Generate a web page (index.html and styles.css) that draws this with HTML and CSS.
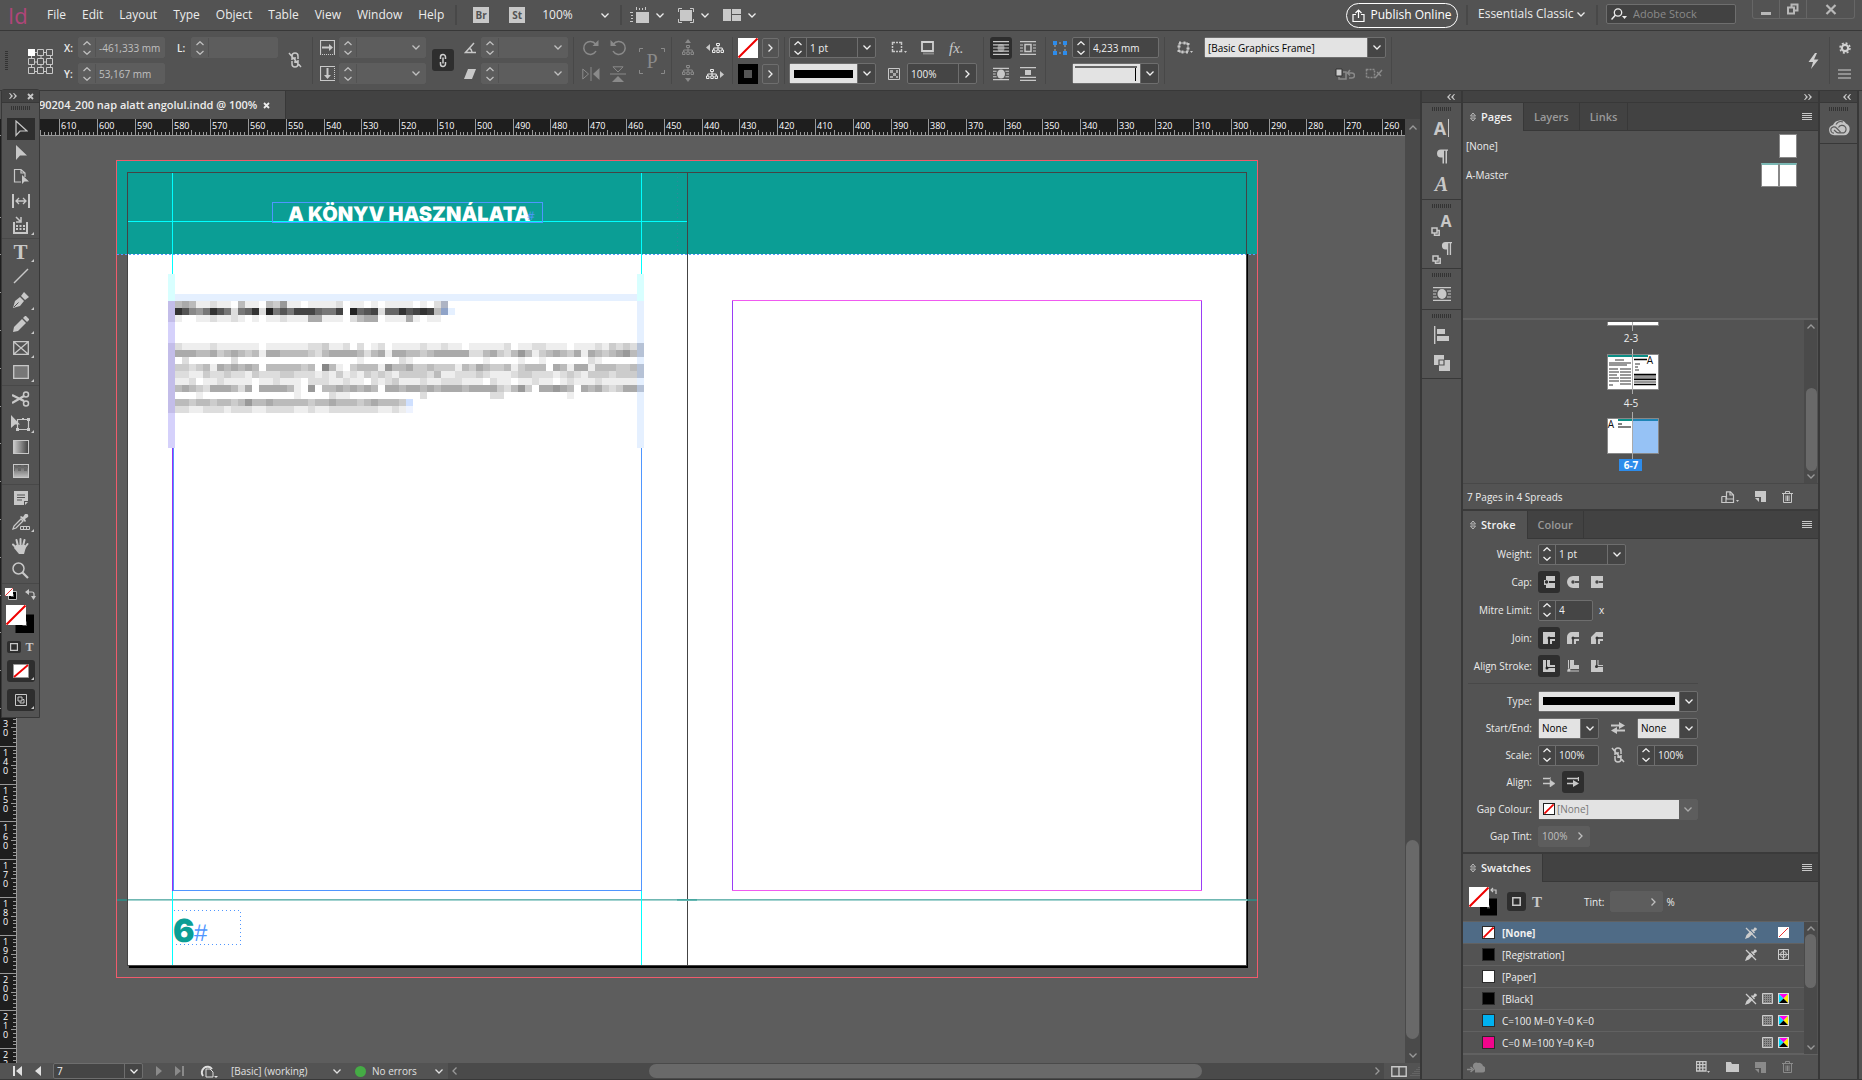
FILE: index.html
```html
<!DOCTYPE html>
<html lang="en">
<head>
<meta charset="utf-8">
<title>90204_200 nap alatt angolul.indd @ 100%</title>
<link rel="stylesheet" href="styles.css">
</head>
<body>
<svg class="defs" aria-hidden="true">
  <defs>
    <symbol id="down" viewBox="0 0 8 5"><path d="M.5.5 4 4 7.5.5" fill="none" stroke="currentColor" stroke-width="1.3"/></symbol>
    <symbol id="up" viewBox="0 0 8 5"><path d="M.5 4.5 4 1 7.5 4.5" fill="none" stroke="currentColor" stroke-width="1.3"/></symbol>
    <symbol id="right" viewBox="0 0 5 8"><path d="M.5.5 4 4 .5 7.5" fill="none" stroke="currentColor" stroke-width="1.3"/></symbol>
    <symbol id="left" viewBox="0 0 5 8"><path d="M4.500.5 1 4 4.500 7.500" fill="none" stroke="currentColor" stroke-width="1.3"/></symbol>
    <symbol id="steps" viewBox="0 0 8 14"><path d="M.5 4 4 .7 7.500 4M.5 10 4 13.300 7.500 10" fill="none" stroke="currentColor" stroke-width="1.2"/></symbol>
    <symbol id="dright" viewBox="0 0 8 6"><path d="M0 0h1l3 3-3 3H0l2-3zM4 0h1l3 3-3 3H4l2-3z" fill="currentColor"/></symbol>
    <symbol id="dleft" viewBox="0 0 8 6"><path d="M8 0H7L4 3l3 3h1L6 3zM4 0H3L0 3l3 3h1L2 3z" fill="currentColor"/></symbol>
    <symbol id="menu" viewBox="0 0 10 8"><path d="M0 .5h10M0 2.500h10M0 4.500h10M0 6.500h10" stroke="currentColor"/></symbol>
    <symbol id="updown" viewBox="0 0 6 10"><path d="M.5 4 3 1l2.500 3zM.5 6 3 9l2.500-3z" fill="none" stroke="currentColor"/></symbol>
    <symbol id="unlink" viewBox="0 0 14 16"><path d="M4 8V4a3 3 0 0 1 6 0v3M4 9v3a3 3 0 0 0 6 0V8M7 5v6M1 1l12 14" fill="none" stroke="currentColor" stroke-width="1.500"/></symbol>
    <symbol id="none" viewBox="0 0 20 20"><path d="M0 0h20v20H0z" fill="#fff"/><path d="M.5 19.500 19.500.5" stroke="#e00" stroke-width="2"/></symbol>
    <symbol id="none-sm" viewBox="0 0 12 12"><path d="M0 0h12v12H0z" fill="#fff"/><path d="M.5 11.500 11.500.5" stroke="#e00" stroke-width="2"/></symbol>
    <symbol id="tree" viewBox="0 0 12 10"><path d="M4.500.5h3v2h-3zM.5 7h2.500v2.500H.5zM4.800 7h2.500v2.500H4.800zM9 7h2.500v2.500H9zM6 3v4M1.700 7V5h8.600v2" fill="none" stroke="currentColor"/></symbol>
    <symbol id="wrapoval" viewBox="0 0 18 14"><path d="M0 .7h18M0 13.300h18M0 4h4M14 4h4M0 7h3M15 7h3M0 10h4M14 10h4" stroke="currentColor" stroke-width="1.200"/><ellipse cx="9" cy="7" rx="4.500" ry="5" fill="currentColor"/></symbol>
    <symbol id="pilcrow" viewBox="0 0 12 14"><path d="M5 0h7v1.200h-1V14H9.500V1.200H8V14H6.500V8H5a4 4 0 0 1 0-8z" fill="currentColor"/></symbol>
    <symbol id="pen-off" viewBox="0 0 12 12"><path d="M0 12l1.500-4 4-4L8 6.500l-4 4zM6 3l1-1 1 1 1.500-2.500C11 0 12.500 1.500 11.500 3L9 4.500l1 1-1 1z" fill="#ccc"/><path d="M1 1l10 10" stroke="#ccc" stroke-width="1.300"/></symbol>
    <symbol id="tintbox" viewBox="0 0 11 11"><path d="M.5.5h10v10H.5z" fill="#8a8a8a" stroke="#ccc"/><path d="M2 2.500h7M2 4.500h7M2 6.500h7M2 8.500h7" stroke="#555" stroke-dasharray="1 1"/></symbol>
    <symbol id="cmyk" viewBox="0 0 11 11"><path d="M0 0h11v11H0z" fill="#ddd"/><path d="M1 1h9L5.500 5.500z" fill="#f0e"/><path d="M1 1v9l4.500-4.500z" fill="#0df"/><path d="M10 1v9L5.500 5.500z" fill="#fe0"/><path d="M1 10h9L5.500 5.500z" fill="#000"/></symbol>
    <symbol id="newpage" viewBox="0 0 11 11"><path d="M0 0h11v11H6V6H0z" fill="currentColor"/><path d="M0 7h4v4z" fill="currentColor"/></symbol>
    <symbol id="trash" viewBox="0 0 11 12"><path d="M0 2.500h11M3.500 2V.5h4V2M1.500 3v8.500h8V3M4 4.500v5.500M5.500 4.500v5.500M7 4.500v5.500" fill="none" stroke="currentColor"/></symbol>
    <symbol id="corner" viewBox="0 0 4 4"><path d="M4 0v4H0z" fill="currentColor"/></symbol>
  </defs>
</svg>

<div class="app">
  <header class="menubar">
    <span class="logo">Id</span>
    <nav class="menus">
      <a href="#">File</a><a href="#">Edit</a><a href="#">Layout</a><a href="#">Type</a><a href="#">Object</a><a href="#">Table</a><a href="#">View</a><a href="#">Window</a><a href="#">Help</a>
    </nav>
    <span class="vsep"></span>
    <button class="badge">Br</button>
    <button class="badge">St</button>
    <label class="zoom"><select aria-label="Zoom"><option>100%</option></select><svg width="8" height="5"><use href="#down"/></svg></label>
    <span class="vsep"></span>
    <div class="views">
      <button aria-label="View options"><svg width="19" height="16"><path d="M6 5h13v11H6z" fill="#c8c8c8"/><path d="M6.500 0v3M9.500 1v2M12.500 1v2M15.500 0v3M0 5.500h3M1 8.500h2M1 11.500h2M0 14.500h3" stroke="#c8c8c8"/></svg><svg width="8" height="5"><use href="#down"/></svg></button>
      <button aria-label="Screen mode"><svg width="16" height="15"><path d="M2 2h12v11H2z" fill="#c8c8c8"/><path d="M.5 4V.5H4M12 .5h3.500V4M.5 11v3.500H4M12 14.500h3.500V11" fill="none" stroke="#c8c8c8"/></svg><svg width="8" height="5"><use href="#down"/></svg></button>
      <button aria-label="Arrange documents"><svg width="18" height="12"><path d="M0 0h8v12H0zM9 0h9v5H9zM9 6h9v6H9z" fill="#c8c8c8"/></svg><svg width="8" height="5"><use href="#down"/></svg></button>
    </div>
    <span class="grow"></span>
    <button class="publish"><svg width="13" height="13"><path d="M4 5.500H1v7h11v-7H9M6.500 9V1M3.500 4l3-3 3 3" fill="none" stroke="currentColor" stroke-width="1.200"/></svg>Publish Online</button>
    <span class="vsep"></span>
    <button class="workspace-name">Essentials Classic<svg width="8" height="5"><use href="#down"/></svg></button>
    <span class="vsep"></span>
    <label class="search"><svg width="16" height="12"><circle cx="7" cy="4.500" r="3.700" fill="none" stroke="currentColor" stroke-width="1.300"/><path d="M4.500 7 .5 11.500" stroke="currentColor" stroke-width="1.500"/><path d="M11 8h5l-2.500 3z" fill="currentColor"/></svg><input type="text" placeholder="Adobe Stock" aria-label="Adobe Stock"></label>
    <div class="winbtns">
      <button aria-label="Minimise"><svg width="12" height="12"><path d="M1 9h10v3H1z" fill="currentColor"/></svg></button>
      <button aria-label="Restore"><svg width="12" height="12"><path d="M1 4.500h6v6H1zM4.500 4V1.500h6v6H8" fill="none" stroke="currentColor" stroke-width="2"/></svg></button>
      <button aria-label="Close"><svg width="12" height="12"><path d="M1.500 2l9 9M10.500 2l-9 9" stroke="currentColor" stroke-width="2.200"/></svg></button>
    </div>
  </header>

  <section class="control">
    <span class="grip-v"></span>
    <svg class="refpoint" width="26" height="26"><path d="M3.500 3.500h19v19h-19zM13 3v20M3 13h20" fill="none" stroke="#c8c8c8"/><g fill="#535353" stroke="#c8c8c8"><path d="M9.500.5h6v6h-6zM18.500.5h6v6h-6zM.5 9.500h6v6h-6zM9.500 9.500h6v6h-6zM18.500 9.500h6v6h-6zM.5 18.500h6v6h-6zM9.500 18.500h6v6h-6zM18.500 18.500h6v6h-6z"/></g><path d="M0 0h7v7H0z" fill="#fff"/></svg>
    <div class="cgroup xy">
      <label for="fx">X:</label><div class="field off"><span><svg width="8" height="14"><use href="#steps"/></svg></span><input id="fx" value="-461,333 mm"></div>
      <label for="fy">Y:</label><div class="field off"><span><svg width="8" height="14"><use href="#steps"/></svg></span><input id="fy" value="53,167 mm"></div>
    </div>
    <div class="cgroup xy len">
      <label for="fl">L:</label><div class="field off"><span><svg width="8" height="14"><use href="#steps"/></svg></span><input id="fl"></div>
    </div>
    <button class="chain" aria-label="Constrain proportions"><svg width="14" height="16"><use href="#unlink"/></svg></button>
    <span class="csep"></span>
    <div class="cgroup scale">
      <svg width="15" height="15"><path d="M.5 14.500V.5h14v14" fill="none" stroke="#c8c8c8" stroke-width="1.200"/><path d="M0 14.500h15" stroke="#c8c8c8" stroke-dasharray="1 1"/><path d="M2 6.500h7V4l4 3.500L9 11V8.500H2z" fill="#c8c8c8"/></svg>
      <div class="field off"><span><svg width="8" height="14"><use href="#steps"/></svg></span><input aria-label="Scale X"><i><svg width="8" height="5"><use href="#down"/></svg></i></div>
      <svg width="15" height="15"><path d="M14.500 14.500H.5V.5h14" fill="none" stroke="#c8c8c8" stroke-width="1.200"/><path d="M14.500 0v15" stroke="#c8c8c8" stroke-dasharray="1 1"/><path d="M6.500 2v7H4l3.500 4L11 9H8.500V2z" fill="#c8c8c8"/></svg>
      <div class="field off"><span><svg width="8" height="14"><use href="#steps"/></svg></span><input aria-label="Scale Y"><i><svg width="8" height="5"><use href="#down"/></svg></i></div>
    </div>
    <button class="tbtn on" aria-label="Link scaling"><svg width="8" height="15"><path d="M1.500 6V4a2.500 2.500 0 0 1 5 0v2M1.500 9v2a2.500 2.500 0 0 0 5 0V9M4 4.500v6" fill="none" stroke="#d0d0d0" stroke-width="1.500"/></svg></button>
    <div class="cgroup angle">
      <svg width="12" height="12"><path d="M10 1 1.500 10.500H12M5 6a5 5 0 0 1 3 4" fill="none" stroke="#c8c8c8" stroke-width="1.500"/></svg>
      <div class="field off"><span><svg width="8" height="14"><use href="#steps"/></svg></span><input aria-label="Rotation"><i><svg width="8" height="5"><use href="#down"/></svg></i></div>
      <svg width="12" height="10"><path d="M4 0h8L8 10H0z" fill="#c8c8c8"/></svg>
      <div class="field off"><span><svg width="8" height="14"><use href="#steps"/></svg></span><input aria-label="Shear"><i><svg width="8" height="5"><use href="#down"/></svg></i></div>
    </div>
    <span class="csep"></span>
    <div class="cgroup rot dim">
      <svg width="18" height="16"><path d="M13.500 4A6.500 6.500 0 1 0 14 11" fill="none" stroke="currentColor" stroke-width="1.500"/><path d="M16.500 0v6h-6z" fill="currentColor"/></svg>
      <svg width="18" height="16"><path d="M4.500 4A6.500 6.500 0 1 1 4 11" fill="none" stroke="currentColor" stroke-width="1.500"/><path d="M1.500 0v6h6z" fill="currentColor"/></svg>
      <svg width="18" height="14"><path d="M.8 2v10L6.500 7zM9 0v14" fill="none" stroke="currentColor"/><path d="M17.500 1v12L11 7z" fill="currentColor"/></svg>
      <svg width="18" height="16"><path d="M4 .8h10L9 6zM1 8h16" fill="none" stroke="currentColor"/><path d="M3 16h12L9 10z" fill="currentColor"/></svg>
    </div>
    <div class="pbox dim"><svg width="26" height="26"><path d="M.5 4V.5H4M22 .5h3.500V4M.5 22v3.500H4M22 25.500h3.500V22" fill="none" stroke="currentColor"/></svg><b>P</b></div>
    <span class="csep"></span>
    <div class="cgroup nav">
      <svg class="dim" width="14" height="17"><path d="M4 4h6L7 0z" fill="currentColor"/><use href="#tree" y="6" x="1" width="12" height="10"/></svg>
      <svg width="19" height="12"><path d="M4 2v7L0 5.500z" fill="#c8c8c8"/><use href="#tree" x="6" y="1" width="12" height="10"/></svg>
      <svg class="dim" width="14" height="17"><use href="#tree" x="1" width="12" height="10"/><path d="M4 13h6l-3 4z" fill="currentColor"/></svg>
      <svg width="19" height="12"><use href="#tree" y="1" width="12" height="10"/><path d="M14 3v7l4-3.500z" fill="#c8c8c8"/></svg>
    </div>
    <span class="csep"></span>
    <div class="cgroup fill">
      <button class="sw" aria-label="Fill"><svg width="20" height="20"><use href="#none"/></svg></button>
      <button class="more" aria-label="Fill options"><svg width="5" height="8"><use href="#right"/></svg></button>
      <button class="sw" aria-label="Stroke"><svg width="20" height="20"><path d="M0 0h20v20H0z"/><path d="M6 6h8v8H6z" fill="#555"/></svg></button>
      <button class="more" aria-label="Stroke options"><svg width="5" height="8"><use href="#right"/></svg></button>
    </div>
    <span class="csep"></span>
    <div class="cgroup one">
      <div class="field"><span><svg width="8" height="14"><use href="#steps"/></svg></span><input aria-label="Stroke weight" value="1 pt"><i><svg width="8" height="5"><use href="#down"/></svg></i></div>
      <div class="combo line"><select aria-label="Stroke type"><option></option></select><i><svg width="8" height="5"><use href="#down"/></svg></i></div>
    </div>
    <div class="fx">
      <div class="fxrow">
        <svg width="16" height="14"><path d="M1.500 4V1.500H4M8 1.500h2.500V4M1.500 8v2.500H4M8 10.500h2.500V8M5 1.500h2M5 10.500h2M1.500 5v2M10.500 5v2" fill="none" stroke="#c8c8c8" stroke-width="1.500"/><path d="M13 10h3l-1.500 2z" fill="#c8c8c8"/></svg>
        <svg width="14" height="14"><path d="M1 1h11v9H1z" fill="none" stroke="#d0d0d0" stroke-width="1.800"/><path d="M2 12.500h11" stroke="#888" stroke-width="2"/></svg>
        <button class="fxb" aria-label="Effects"><i>fx.</i></button>
      </div>
      <div class="fxrow">
        <svg width="12" height="12"><path d="M.5.5h11v11H.5z" fill="none" stroke="#c8c8c8"/><path d="M2 2h3v3H2zM8 2h2v3H8zM5 5h3v3H5zM2 8h3v2H2zM8 8h2v2H8z" fill="#aaa"/></svg>
        <div class="field pct"><input aria-label="Opacity" value="100%"><i><svg width="5" height="8"><use href="#right"/></svg></i></div>
      </div>
    </div>
    <span class="csep"></span>
    <div class="cgroup wrap">
      <button class="tbtn on" aria-label="No text wrap"><svg width="16" height="14"><path d="M0 .7h16M0 3.800h16M0 7h16M0 10.200h16M0 13.300h16" stroke="#c8c8c8" stroke-width="1.200"/><ellipse cx="8" cy="7" rx="3.500" ry="4" fill="#c8c8c8" opacity=".6"/></svg></button>
      <button class="tbtn" aria-label="Wrap around box"><svg width="16" height="14"><path d="M0 .7h16M0 13.300h16M0 4h3M13 4h3M0 7h3M13 7h3M0 10h3M13 10h3" stroke="#c8c8c8" stroke-width="1.200"/><path d="M5 3.500h6v7H5z" fill="none" stroke="#c8c8c8" stroke-width="1.500"/></svg></button>
      <button class="tbtn" aria-label="Wrap around shape"><svg width="16" height="14" color="#c8c8c8"><use href="#wrapoval"/></svg></button>
      <button class="tbtn" aria-label="Jump object"><svg width="16" height="14"><path d="M0 .7h16M0 10.300h16M0 13.300h16" stroke="#c8c8c8" stroke-width="1.200"/><path d="M5 3h6v5H5z" fill="#c8c8c8"/></svg></button>
    </div>
    <span class="csep"></span>
    <div class="cgroup cornerg">
      <svg width="14" height="14"><path d="M2 2h10v10H2z" fill="none" stroke="#aaa" stroke-dasharray="2 2"/><path d="M0 0h4v4H0zM10 0h4v4h-4zM0 10h4v4H0zM10 10h4v4h-4z" fill="#2d8ceb"/></svg>
      <div class="field"><span><svg width="8" height="14"><use href="#steps"/></svg></span><input aria-label="Corner size" value="4,233 mm"></div>
      <span></span>
      <div class="combo shape"><select aria-label="Corner shape"><option></option></select><i><svg width="8" height="5"><use href="#down"/></svg></i></div>
    </div>
    <span class="csep"></span>
    <div class="objstyle">
      <svg width="16" height="14"><path d="M2 2h9v9H2z" fill="none" stroke="#c8c8c8"/><path d="M2 2h9v9H2z" fill="none" stroke="#c8c8c8" stroke-width="3" stroke-dasharray="2 2.500"/><path d="M13 10h3l-1.500 2z" fill="#c8c8c8"/></svg>
      <div class="combo text"><select aria-label="Object style"><option>[Basic Graphics Frame]</option></select><i><svg width="8" height="5"><use href="#down"/></svg></i></div>
      <div class="objicons dim">
        <svg width="20" height="12"><path d="M1 1h6v7H1z" fill="#ccc" stroke="#333"/><path d="M8 4h3v7H4V9M13 5h4a2 2 0 0 1 0 5h-3M15 2l-2.500 3L15 7.500" fill="none" stroke="currentColor" stroke-width="1.500"/></svg>
        <svg width="18" height="12"><path d="M1.500 1.500h8v8h-8z" fill="none" stroke="currentColor" stroke-width="1.500" stroke-dasharray="2 1"/><path d="M10 10l7-8M12 4l4 4" stroke="currentColor" stroke-width="1.500"/></svg>
      </div>
    </div>
    <span class="csep"></span>
    <span class="grow"></span>
    <button class="bolt" aria-label="Quick apply"><svg width="11" height="16"><path d="M7 0 .5 9H5l-2 7 7.500-9.500H6L9 0z" fill="#d0d0d0"/></svg></button>
    <span class="csep"></span>
    <div class="cfgcol">
      <button aria-label="Customise"><svg width="12" height="12"><circle cx="6" cy="6" r="3.200" fill="none" stroke="#d0d0d0" stroke-width="2.200"/><circle cx="6" cy="6" r="5" fill="none" stroke="#d0d0d0" stroke-width="1.500" stroke-dasharray="2 1.930"/></svg></button>
      <button aria-label="Panel menu"><svg width="13" height="10"><path d="M0 1h13M0 5h13M0 9h13" stroke="#d0d0d0" stroke-width="1.200"/></svg></button>
    </div>
  </section>

  <main class="workspace">
    <section class="document">
      <div class="doctabs"><div class="doctab">90204_200 nap alatt angolul.indd @ 100%<button aria-label="Close document"><svg width="7" height="7"><path d="M1 1l5 5M6 1 1 6" stroke="currentColor" stroke-width="1.800"/></svg></button></div></div>
      <div class="docview">
        <div class="hruler"><svg id="hruler" height="17"></svg></div>
        <div class="vruler"><svg id="vruler" width="17"></svg></div>
        <div class="pasteboard">
          <svg class="spread" width="1143" height="819" viewBox="116 160 1143 819" shape-rendering="crispEdges">
            <path d="M129 174h1119v794H129z" fill="#000"/>
            <path d="M127 172h1120v794H127z" fill="#fff"/>
            <path d="M117 161h1140v93H117z" fill="#0b9e95"/>
            <path d="M117 254.500h1140" stroke="#5a9bff" stroke-dasharray="2 2"/>
            <path d="M677.500 173v81" stroke="#2f8a9a" stroke-dasharray="1 3"/>
            <path d="M127.500 172.500h1119v793h-1119zM687.500 172v793" fill="none" stroke="#444"/>
            <path d="M117 899h10v2h-10zM1247 899h10v2h-10z" fill="#35837e"/>
            <path d="M128 899h1119v1H128z" fill="#6fb7b2"/><path d="M128 900h1119v1H128z" fill="#a3d3d0"/><path d="M677 899h20v2h-20z" fill="#0b8e85" opacity=".4"/>
            <path d="M172.500 173v792M641.500 173v792M128 221.500h559" stroke="#0ff"/>
            <path d="M172.500 448v443" stroke="#9a2df5"/>
            <path d="M173.500 448v442.500h468V448" fill="none" stroke="#4f96ff"/>
            <path d="M732.500 300v591M1201.500 300v591" stroke="#9a3df5"/>
            <path d="M732 300.500h470M732 890.500h470" stroke="#f05af0"/>
            <path d="M272.500 202.500h270v20h-270z" fill="none" stroke="#4f96ff"/>
            <path d="M174 910.500h66.500v34H174" fill="none" stroke="#4f96ff" stroke-dasharray="1 3"/>
            <path d="M116.500 160.500h1141v817h-1141z" fill="none" stroke="#f05b6c"/>
            <g id="mosaic"></g>
            <text x="288" y="221" class="t-title">A KÖNYV HASZNÁLATA</text>
            <text x="527" y="220" class="t-mark">#</text>
            <text x="173" y="942" class="t-folio">6</text>
            <text x="194" y="941" class="t-hash">#</text>
          </svg>
        </div>
        <div class="vscroll"><svg width="8" height="5"><use href="#up"/></svg><span class="vtrack"><span class="thumb"></span></span><svg width="8" height="5"><use href="#down"/></svg></div>
      </div>
      <footer class="status">
        <button class="s1" aria-label="First page"><svg width="9" height="10"><path d="M0 0h2v10H0zM9 0v10L3 5z" fill="currentColor"/></svg></button>
        <button aria-label="Previous page"><svg width="6" height="10"><path d="M6 0v10L0 5z" fill="currentColor"/></svg></button>
        <div class="field page"><input aria-label="Page" value="7"><i><svg width="8" height="5"><use href="#down"/></svg></i></div>
        <button class="dim" aria-label="Next page"><svg width="6" height="10"><path d="M0 0v10l6-5z" fill="currentColor"/></svg></button>
        <button class="dim" aria-label="Last page"><svg width="9" height="10"><path d="M9 0H7v10h2zM0 0v10l6-5z" fill="currentColor"/></svg></button>
        <button class="s2" aria-label="Open"><svg width="18" height="13"><path d="M3 11A5.500 5.500 0 1 1 12 4" fill="none" stroke="currentColor" stroke-width="2"/><path d="M6 4h4l3 3v5H6z" fill="#535353" stroke="currentColor"/><path d="M14 11h4l-2 2z" fill="currentColor"/></svg></button>
        <label class="profile"><select aria-label="Preflight profile"><option>[Basic] (working)</option></select><svg width="8" height="5"><use href="#down"/></svg></label>
        <button class="errors"><span class="dot"></span>No errors<svg width="8" height="5"><use href="#down"/></svg></button>
        <div class="hscroll"><svg width="5" height="8"><use href="#left"/></svg><span class="htrack"><span class="thumb"></span></span><svg width="5" height="8"><use href="#right"/></svg></div>
        <button class="split" aria-label="Split layout"><svg width="16" height="11"><path d="M.8.8h14.400v9.400H.8zM8 1v9" fill="none" stroke="#c8c8c8" stroke-width="1.400"/></svg></button>
        <svg class="sizer" width="10" height="10"><path d="M9 1v9M7 3v7M5 5v5M3 7v3M1 9v1" stroke="#777" stroke-dasharray="1 1"/></svg>
      </footer>
    </section>

    <aside class="dock icons">
      <div class="dockhead"><svg width="8" height="6"><use href="#dleft"/></svg></div>
      <div class="iconset">
        <span class="grip"></span>
        <button aria-label="Character"><b class="ga">A</b><span class="bar"></span></button>
        <button aria-label="Paragraph"><svg width="12" height="15"><use href="#pilcrow"/></svg></button>
        <button aria-label="Glyphs"><b class="gs">A</b></button>
      </div>
      <div class="iconset">
        <span class="grip"></span>
        <button aria-label="Character styles"><svg width="9" height="9" class="low"><path d="M1 1h5v5H1zM6 3.500h2.200v4.700H3.500V6" fill="none" stroke="currentColor" stroke-width="1.500"/></svg><b class="gm">A</b></button>
        <button aria-label="Paragraph styles"><svg width="9" height="9" class="low"><path d="M1 1h5v5H1zM6 3.500h2.200v4.700H3.500V6" fill="none" stroke="currentColor" stroke-width="1.500"/></svg><svg class="hi" width="11" height="13"><use href="#pilcrow"/></svg></button>
      </div>
      <div class="iconset">
        <span class="grip"></span>
        <button aria-label="Text wrap"><svg width="18" height="14"><use href="#wrapoval"/></svg></button>
      </div>
      <div class="iconset">
        <span class="grip"></span>
        <button aria-label="Align"><svg width="16" height="18"><path d="M.7 0v18" stroke="currentColor" stroke-width="1.400"/><path d="M3 3h8v5H3zM3 10h12v5H3z" fill="currentColor"/></svg></button>
        <button aria-label="Pathfinder"><svg width="16" height="16"><path d="M0 0h10v10H0zM5 5h11v11H5z" fill="currentColor"/><path d="M5 5h5v5H5z" fill="#ccc" stroke="#535353" stroke-width="1.200"/></svg></button>
      </div>
    </aside>

    <aside class="dock panels">
      <div class="dockhead end"><svg width="8" height="6"><use href="#dright"/></svg></div>
      <section class="panel pages">
        <div class="tabs"><button class="tab sel"><svg width="6" height="10"><use href="#updown"/></svg>Pages</button><button class="tab">Layers</button><button class="tab">Links</button><span class="grow"></span><button class="pmenu" aria-label="Panel menu"><svg width="10" height="8"><use href="#menu"/></svg></button></div>
        <div class="masters">
          <div class="master"><span>[None]</span><span class="pg"></span></div>
          <div class="master"><span>A-Master</span><span class="pg2"><span class="pg m"></span><span class="pg m"></span></span></div>
        </div>
        <div class="spreads">
          <div class="thumbs">
            <svg width="52" height="32"><path d="M.5-2h51v5.500H.5z" fill="#fff" stroke="#888"/><path d="M25.500 0v9" stroke="#aaa"/><text x="24" y="20">2-3</text><path d="M25.500 27v5" stroke="#ccc"/></svg>
            <svg width="52" height="64"><path d="M.5.5h51v35H.5z" fill="#fff" stroke="#888"/><path d="M1 1h40v2H1z" fill="#0b8e85"/><path d="M8 6h9M2 9h22M2 11h18M2 15h9M2 18h10M2 21h8M2 24h10M2 27h10M13 15h11M13 18h11M13 21h11M13 24h11M13 27h11M13 30h11M2 31h4M28 10h5M28 13h3M28 16h4M27 22h22M27 24h22M27 28h22" stroke="#777" stroke-width="1.600"/><path d="M27 5.500h13M27 20.500h22M27 25.500h22M27 30.500h22" stroke="#000" stroke-width="1.500"/><path d="M25.500 0v40M25.500 58v6" stroke="#aaa"/><text x="43" y="10" class="dk">A</text><text x="24" y="53">4-5</text></svg>
            <svg width="52" height="56"><path d="M.5.5h51v35H.5z" fill="#fff" stroke="#888"/><path d="M26 1h25v34H26z" fill="#96c2f5"/><path d="M11 1h15v2H11z" fill="#0b8e85"/><path d="M26 1h25v2H26z" fill="#1d84b5"/><path d="M11 6h4M11 9h13" stroke="#555" stroke-width="1.600"/><path d="M25.500 0v41" stroke="#aaa"/><text x="4" y="10" class="dk">A</text><path d="M12 41h23v12H12z" fill="#2d8ceb"/><text x="24" y="51" class="hot">6-7</text></svg>
          </div>
          <div class="scroll"><svg width="8" height="5"><use href="#up"/></svg><span class="vtrack low"><span class="thumb"></span></span><svg width="8" height="5"><use href="#down"/></svg></div>
        </div>
        <footer class="pfoot"><span class="grow">7 Pages in 4 Spreads</span>
          <button aria-label="Edit page size"><svg width="18" height="12"><path d="M.8 5.500H5v6h7.500v-3M.8 5.500v6H6M5.500 8V.8h4L12.500 4v4zM9 1v3h3" fill="none" stroke="currentColor" stroke-width="1.200"/><path d="M15 9h3l-1.500 2z" fill="currentColor"/></svg></button>
          <button aria-label="New page"><svg width="11" height="11"><use href="#newpage"/></svg></button>
          <button aria-label="Delete page"><svg width="11" height="12"><use href="#trash"/></svg></button>
        </footer>
      </section>

      <section class="panel stroke">
        <div class="tabs"><button class="tab sel"><svg width="6" height="10"><use href="#updown"/></svg>Stroke</button><button class="tab">Colour</button><span class="grow"></span><button class="pmenu" aria-label="Panel menu"><svg width="10" height="8"><use href="#menu"/></svg></button></div>
        <div class="form">
          <label for="sw">Weight:</label><div class="r"><div class="field w88"><span><svg width="8" height="14"><use href="#steps"/></svg></span><input id="sw" value="1 pt"><i><svg width="8" height="5"><use href="#down"/></svg></i></div></div>
          <span>Cap:</span><div class="r"><button class="tbtn on" aria-label="Butt cap"><svg width="12" height="14"><path d="M3 1h9v5H6v2h6v5H3v-3H1V5h2z" fill="#c8c8c8"/><circle cx="3.500" cy="7" r="1.700" fill="#2e2e2e"/></svg></button><button class="tbtn" aria-label="Round cap"><svg width="12" height="14"><path d="M6 1h6v5H8v2h4v5H6A6 6 0 0 1 6 1z" fill="#c8c8c8"/><circle cx="6" cy="7" r="1.700" fill="#444"/></svg></button><button class="tbtn" aria-label="Projecting cap"><svg width="12" height="14"><path d="M0 1h12v5H8v2h4v5H0z" fill="#c8c8c8"/><circle cx="6" cy="7" r="1.700" fill="#444"/></svg></button></div>
          <label for="ml">Mitre Limit:</label><div class="r"><div class="field w55"><span><svg width="8" height="14"><use href="#steps"/></svg></span><input id="ml" value="4"></div><span class="unit">x</span></div>
          <span>Join:</span><div class="r"><button class="tbtn on" aria-label="Mitre join"><svg width="12" height="12"><path d="M0 0h12v5H5v7H0zM7 7h5v2H9v3H7z" fill="#c8c8c8"/><circle cx="6" cy="6" r="1.500" fill="#222"/></svg></button><button class="tbtn" aria-label="Round join"><svg width="12" height="12"><path d="M5 0h7v5H5v7H0V5a5 5 0 0 1 5-5zM7 7h5v2H9v3H7z" fill="#c8c8c8"/><circle cx="6" cy="6" r="1.500" fill="#333"/></svg></button><button class="tbtn" aria-label="Bevel join"><svg width="12" height="12"><path d="M5 0h7v5H5v7H0V5zM7 7h5v2H9v3H7z" fill="#c8c8c8"/><circle cx="6" cy="6" r="1.500" fill="#333"/></svg></button></div>
          <span>Align Stroke:</span><div class="r"><button class="tbtn on" aria-label="Align centre"><svg width="12" height="12"><path d="M0 0h3v8h9v4H0zM4 0h3v5h5v2H4z" fill="#c8c8c8"/><circle cx="4" cy="8" r="1.500" fill="#222"/></svg></button><button class="tbtn" aria-label="Align inside"><svg width="12" height="12"><path d="M3 0h4v5h5v4H3z" fill="#c8c8c8"/><path d="M1.500 0v8.500M0 11h12" stroke="#c8c8c8"/><circle cx="2" cy="10" r="1.500" fill="#c8c8c8"/></svg></button><button class="tbtn" aria-label="Align outside"><svg width="12" height="12"><path d="M0 0h5v7h7v5H0zM6.500 0h1v5H12v1H6.500z" fill="#c8c8c8"/><circle cx="5.500" cy="6.500" r="1.500" fill="#333"/></svg></button></div>
        </div>
        <hr>
        <div class="form two">
          <span>Type:</span><div class="r"><div class="combo line w160"><select aria-label="Type"><option></option></select><i><svg width="8" height="5"><use href="#down"/></svg></i></div></div>
          <span>Start/End:</span><div class="r"><div class="combo text w61"><select aria-label="Start"><option>None</option></select><i><svg width="8" height="5"><use href="#down"/></svg></i></div><button class="mid" aria-label="Swap"><svg width="14" height="12"><path d="M0 3.500h9M5 8.500h9" stroke="currentColor" stroke-width="2"/><path d="M8 0l6 3.500L8 7zM6 5 0 8.500 6 12z" fill="currentColor"/></svg></button><div class="combo text w61"><select aria-label="End"><option>None</option></select><i><svg width="8" height="5"><use href="#down"/></svg></i></div></div>
          <label for="sc">Scale:</label><div class="r"><div class="field w61"><span><svg width="8" height="14"><use href="#steps"/></svg></span><input id="sc" value="100%"></div><button class="mid" aria-label="Link scale"><svg width="14" height="16"><use href="#unlink"/></svg></button><div class="field w61"><span><svg width="8" height="14"><use href="#steps"/></svg></span><input aria-label="End scale" value="100%"></div></div>
          <span>Align:</span><div class="r"><button class="tbtn" aria-label="Extend arrow"><svg width="12" height="10"><path d="M0 1.500h7M0 6.500h8" stroke="#c8c8c8" stroke-width="1.300"/><path d="M7.500 0v3M7 3l5 3.500L7 10z" fill="#c8c8c8" stroke="#c8c8c8" stroke-width=".5"/></svg></button><button class="tbtn on" aria-label="Place arrow tip"><svg width="12" height="10"><path d="M0 1.500h11M0 6.500h8M11.500 0v4" stroke="#c8c8c8" stroke-width="1.300"/><path d="M6 3l6 3.500L6 10z" fill="#c8c8c8"/></svg></button></div>
          <span>Gap Colour:</span><div class="r"><div class="combo text gap w160"><svg width="12" height="12"><use href="#none-sm"/></svg><select aria-label="Gap Colour"><option>[None]</option></select><i><svg width="8" height="5"><use href="#down"/></svg></i></div></div>
          <label for="gt">Gap Tint:</label><div class="r"><div class="field off w52"><input id="gt" value="100%"><i><svg width="5" height="8"><use href="#right"/></svg></i></div></div>
        </div>
      </section>

      <section class="panel swatches">
        <div class="tabs"><button class="tab sel"><svg width="6" height="10"><use href="#updown"/></svg>Swatches</button><span class="grow"></span><button class="pmenu" aria-label="Panel menu"><svg width="10" height="8"><use href="#menu"/></svg></button></div>
        <div class="swtop">
          <svg width="30" height="30"><path d="M14.500 15h10v10h-10z" fill="none" stroke="#000" stroke-width="7"/><path d="M22 3h5v4M24 1l-2 2 2 2" fill="none" stroke="#c8c8c8" stroke-width="1.200"/><use href="#none" width="20" height="20"/></svg>
          <button class="tbtn on" aria-label="Container"><svg width="9" height="9"><path d="M.8.8h7.400v7.400H.8z" fill="none" stroke="#c8c8c8" stroke-width="1.500"/></svg></button>
          <button class="tt" aria-label="Text">T</button>
          <label for="tint">Tint:</label>
          <div class="field off w53"><input id="tint"><i><svg width="5" height="8"><use href="#right"/></svg></i></div><span>%</span>
        </div>
        <div class="swlist">
          <ul>
            <li class="sel"><svg class="chip" width="12" height="12"><use href="#none-sm"/></svg><span class="grow">[None]</span><svg width="12" height="12"><use href="#pen-off"/></svg><span></span><svg width="11" height="11"><path d="M0 0h11v11H0z" fill="#fff"/><path d="M1 10l9-9" stroke="#e33"/></svg></li>
            <li><span class="chip" style="background:#000"></span><span class="grow">[Registration]</span><svg width="12" height="12"><use href="#pen-off"/></svg><span></span><svg width="11" height="11"><path d="M.5.5h10v10H.5zM5.500 1v9M1 5.500h9" fill="none" stroke="#ccc"/><circle cx="5.500" cy="5.500" r="3" fill="none" stroke="#ccc"/></svg></li>
            <li><span class="chip" style="background:#fff"></span><span class="grow">[Paper]</span></li>
            <li><span class="chip" style="background:#000"></span><span class="grow">[Black]</span><svg width="12" height="12"><use href="#pen-off"/></svg><svg width="11" height="11"><use href="#tintbox"/></svg><svg width="11" height="11"><use href="#cmyk"/></svg></li>
            <li><span class="chip" style="background:#00b1f0"></span><span class="grow">C=100 M=0 Y=0 K=0</span><svg width="11" height="11"><use href="#tintbox"/></svg><svg width="11" height="11"><use href="#cmyk"/></svg></li>
            <li><span class="chip" style="background:#f2058c"></span><span class="grow">C=0 M=100 Y=0 K=0</span><svg width="11" height="11"><use href="#tintbox"/></svg><svg width="11" height="11"><use href="#cmyk"/></svg></li>
          </ul>
          <div class="scroll"><svg width="8" height="5"><use href="#up"/></svg><span class="vtrack high"><span class="thumb"></span></span><svg width="8" height="5"><use href="#down"/></svg></div>
        </div>
        <footer class="pfoot sw">
          <svg class="dim" width="18" height="12"><path d="M0 8.500h5M3.500 6l3 2.500-3 2.500" fill="none" stroke="currentColor" stroke-width="1.500"/><path d="M8 11.500V9L6 6a3.500 3.500 0 0 1 5-4 4 4 0 0 1 5 3 3.300 3.300 0 0 1-1 6.500z" fill="currentColor"/></svg><span class="grow"></span>
          <button aria-label="Swatch views"><svg width="14" height="12"><path d="M.5.5h9.500V10H.5zM.5 3.700H10M.5 6.800H10M3.700.5V10M6.800.5V10" fill="none" stroke="currentColor" stroke-width="1.300"/><path d="M11 10h3l-1.500 2z" fill="currentColor"/></svg></button>
          <button aria-label="New group"><svg width="13" height="10"><path d="M0 0h5l1 2h7v8H0z" fill="currentColor"/></svg></button>
          <button class="dim" aria-label="New swatch"><svg width="11" height="11"><use href="#newpage"/></svg></button>
          <button class="dim" aria-label="Delete swatch"><svg width="11" height="12"><use href="#trash"/></svg></button>
        </footer>
      </section>
    </aside>

    <aside class="dock cc">
      <div class="dockhead"><svg width="8" height="6"><use href="#dleft"/></svg></div>
      <div class="iconset"><span class="grip"></span>
        <button aria-label="CC Libraries"><svg width="22" height="16"><path d="M6 15.300a5.300 5.300 0 0 1-1-10.400A7.500 7.500 0 0 1 18 3.500a6.200 6.200 0 0 1-2 11.800z" fill="#c4c4c4"/><path d="M6 13.200a3.200 3.200 0 1 1 2.500-5.200l4 4.200M8 4.500a5.500 5.500 0 0 1 7-2.500M10.500 7.500a4 4 0 1 1 5.500 5.300H10c-1.500 0-2-1-4-3" fill="none" stroke="#5a5a5a" stroke-width="1.200"/></svg></button>
      </div>
    </aside>
    <span class="edge"></span>
  </main>

  <aside class="toolbox">
    <div class="tbhead"><svg width="8" height="6"><use href="#dright"/></svg><svg width="7" height="7"><path d="M1 1l5 5M6 1 1 6" stroke="currentColor" stroke-width="1.800"/></svg></div>
    <span class="grip"></span>
    <div class="tools">
      <button class="on" aria-label="Selection"><svg width="14" height="18"><path d="M2 1v14.500l4-4.500h7z" fill="none" stroke="currentColor" stroke-width="1.200"/></svg></button>
      <button aria-label="Direct selection"><svg width="14" height="18"><path d="M2 1v15l4-4.500h7z" fill="currentColor"/></svg></button>
      <button aria-label="Page"><svg width="16" height="18"><path d="M8 14H1.500V1.500H8L12 5v4M8 2v3h4" fill="none" stroke="currentColor" stroke-width="1.200"/><path d="M9 7v9l2.500-2.500H16z" fill="currentColor"/></svg></button>
      <button aria-label="Gap"><svg width="18" height="14"><path d="M1 0v14M17 0v14" stroke="currentColor" stroke-width="2"/><path d="M4 7h10M7 4 4 7l3 3M11 4l3 3-3 3" fill="none" stroke="currentColor" stroke-width="1.300"/></svg></button>
      <button aria-label="Content collector"><svg width="15" height="18"><path d="M1 6v11h13V6" fill="none" stroke="currentColor" stroke-width="2"/><path d="M3 1l4 4M8 1v5H3" fill="none" stroke="currentColor" stroke-width="1.500"/><path d="M3 10h9M3 13h9" stroke="currentColor" stroke-width="2" stroke-dasharray="2 1.500"/></svg><svg class="cor" width="3" height="3"><use href="#corner"/></svg></button>
      <hr>
      <button class="tt" aria-label="Type">T<svg class="cor" width="3" height="3"><use href="#corner"/></svg></button>
      <button aria-label="Line"><svg width="16" height="16"><path d="M1 15 15 1" stroke="currentColor" stroke-width="1.400"/></svg></button>
      <button aria-label="Pen"><svg width="16" height="16"><path d="M0 16l2-7 5-4 4 4-4 5zM8 4l3-4 5 5-4 3z" fill="currentColor"/><path d="M1 15l4.500-4.500" stroke="#535353"/></svg><svg class="cor" width="3" height="3"><use href="#corner"/></svg></button>
      <button aria-label="Pencil"><svg width="16" height="16"><path d="M0 16l1-5 8-8 4 4-8 8zM10 2l2-2h1l3 3v1l-2 2z" fill="currentColor"/></svg><svg class="cor" width="3" height="3"><use href="#corner"/></svg></button>
      <button aria-label="Rectangle frame"><svg width="16" height="14"><path d="M.7.7h14.600v12.600H.7zM1 1l14 12M15 1 1 13" fill="none" stroke="currentColor" stroke-width="1.300"/></svg><svg class="cor" width="3" height="3"><use href="#corner"/></svg></button>
      <button aria-label="Rectangle"><svg width="16" height="14"><path d="M.7.7h14.600v12.600H.7z" fill="#777" stroke="currentColor" stroke-width="1.300"/></svg><svg class="cor" width="3" height="3"><use href="#corner"/></svg></button>
      <hr>
      <button aria-label="Scissors"><svg width="18" height="16"><circle cx="14" cy="3.500" r="2.500" fill="none" stroke="currentColor" stroke-width="1.500"/><circle cx="14" cy="12.500" r="2.500" fill="none" stroke="currentColor" stroke-width="1.500"/><path d="M0 4l12 6M0 12l12-7" stroke="currentColor" stroke-width="2.300"/></svg></button>
      <button aria-label="Free transform"><svg width="20" height="17"><path d="M6.500 4.500h11v10h-11z" fill="none" stroke="currentColor" stroke-width="1.200"/><path d="M16 3h3v3h-3zM16 13h3v3h-3zM5 13h3v3H5zM11 3h2v2h-2z" fill="currentColor"/><path d="M0 0v13l4-3.500h5z" fill="currentColor"/></svg><svg class="cor" width="3" height="3"><use href="#corner"/></svg></button>
      <button aria-label="Gradient swatch"><span class="grad"></span></button>
      <button aria-label="Gradient feather"><span class="grad feather"></span></button>
      <hr>
      <button aria-label="Note"><svg width="14" height="14"><path d="M0 0h14v10h-4v4H0zM11 11h3l-3 3z" fill="currentColor"/><path d="M3 4h8M3 6.500h8M3 9h5" stroke="#535353" stroke-width="1.200"/></svg></button>
      <button aria-label="Eyedropper"><svg width="18" height="17"><path d="M1 15l1-3 7-7 2 2-7 7z" fill="none" stroke="currentColor" stroke-width="1.300"/><path d="M9 2l2 1 2-3c2-1 4 1 3 3l-3 2 1 2-1 1-5-5z" fill="currentColor"/><path d="M8.500 12.500h9v3h-9zM11.500 12v4M14.500 12v4" fill="none" stroke="currentColor"/></svg><svg class="cor" width="3" height="3"><use href="#corner"/></svg></button>
      <button aria-label="Hand"><svg width="17" height="17"><path d="M4.500 10 1 6.500M6 8 4.500 2M8.500 8V1M11 8l1.500-6M12.500 10 15.500 6" stroke="currentColor" stroke-width="2" stroke-linecap="round"/><path d="M4 7h9l1 2-2 7H7l-5-6z" fill="currentColor"/></svg></button>
      <button aria-label="Zoom"><svg width="17" height="17"><circle cx="6.500" cy="6.500" r="5.500" fill="none" stroke="currentColor" stroke-width="1.500"/><path d="M10.500 10.500l5.500 5.500" stroke="currentColor" stroke-width="2.200"/></svg></button>
      <hr>
    </div>
    <div class="mini"><svg width="12" height="12"><path d="M5 5h5v5H5z" fill="none" stroke="#000" stroke-width="2"/><path d="M3.500 3.500h8v8h-8z" fill="none" stroke="#bbb"/><use href="#none" width="8" height="8"/></svg><svg width="11" height="11"><path d="M2 3h5a2 2 0 0 1 2 2v4" fill="none" stroke="currentColor" stroke-width="1.200"/><path d="M4 0v6L0 3zM6 7h5l-2.500 4z" fill="currentColor"/></svg></div>
    <svg class="big" width="28" height="28"><path d="M13 13h11.500v11.500H13z" fill="none" stroke="#000" stroke-width="7"/><use href="#none" width="20" height="20"/></svg>
    <div class="fmt"><button class="on" aria-label="Formatting affects container"><svg width="8" height="8"><path d="M.6.6h6.800v6.800H.6z" fill="none" stroke="currentColor" stroke-width="1.200"/></svg></button><button class="tt" aria-label="Formatting affects text">T</button></div>
    <button class="bigbtn" aria-label="Apply none"><svg width="16" height="14"><path d="M.5.5h15v13H.5z" fill="#fff" stroke="#999"/><path d="M1 13 15 1" stroke="#e00" stroke-width="1.800"/></svg><svg class="cor" width="3" height="3"><use href="#corner"/></svg></button>
    <button class="bigbtn" aria-label="Screen mode"><svg width="12" height="12"><path d="M.5.500h11v11H.5zM3 3h4v4H3zM7.500 5.500H9V9H5V7.500" fill="none" stroke="#c8c8c8"/></svg><svg class="cor" width="3" height="3"><use href="#corner"/></svg></button>
  </aside>
</div>
<script src="app.js"></script>
</body>
</html>
```
FILE: styles.css
```css
* { box-sizing: border-box; }
html, body { margin: 0; height: 100%; }
body { font: 10px/12px "Open Sans", "Noto Sans", sans-serif; color: #ececec; background: #535353; }
button, input, select { font: inherit; color: inherit; background: none; border: 0; padding: 0; margin: 0; }
select { appearance: none; }
a { color: inherit; text-decoration: none; }
svg { display: block; flex: none; }
ul { list-style: none; margin: 0; padding: 0; }
.defs { position: absolute; width: 0; height: 0; }
.grow { flex: 1; }
.dim { color: #8a8a8a; }

.app { position: relative; display: flex; flex-direction: column; height: 100vh; overflow: hidden; border-bottom: 1px solid #383838; }

/* menu bar */
.menubar { display: flex; align-items: center; height: 31px; flex: none; padding: 0 7px 0 8px; border-bottom: 1px solid #383838; font-size: 12px; line-height: 16px; white-space: nowrap; }
.logo { width: 39px; font: 22px/30px "Open Sans", sans-serif; color: #b0467a; }
.menus { display: flex; gap: 16px; }
.vsep { width: 2px; height: 20px; background: #484848; margin-left: 11px; }
.badge { width: 16px; height: 16px; background: #c8c8c8; color: #535353; font: bold 10px/16px "Open Sans", sans-serif; margin-left: 16px; }
.badge + .badge { margin-left: 20px; }
.zoom { display: flex; align-items: center; margin-left: 17px; width: 67px; justify-content: space-between; }
.zoom + .vsep { margin-left: 11px; }
.views { display: flex; gap: 14px; padding-left: 8px; }
.views button { display: flex; align-items: center; gap: 7px; }
.publish { display: flex; align-items: center; justify-content: center; gap: 5px; width: 112px; height: 25px; border: 1px solid #fff; border-radius: 13px; color: #fff; }
.menubar .publish + .vsep { margin-left: 8px; }
.workspace-name { display: flex; align-items: center; justify-content: space-between; width: 107px; margin: 0 0 2px 10px; }
.search { display: flex; align-items: center; gap: 6px; width: 130px; height: 20px; margin: 0 0 2px 8px; padding: 0 4px; background: #424242; border: 1px solid #6e6e6e; border-radius: 2px; font-size: 11px; }
.search input { width: 90px; }
.search input::placeholder { color: #8a8a8a; opacity: 1; }
.winbtns { display: flex; align-self: flex-start; height: 19px; margin-left: 16px; border: 1px solid #666; border-top: 0; border-radius: 0 0 3px 3px; }
.winbtns button { width: 27px; display: grid; place-items: center; border-right: 1px solid #666; color: #b8b8b8; }
.winbtns button:last-child { width: 47px; border: 0; }

/* control strip */
.control { display: flex; align-items: flex-start; height: 60px; flex: none; padding: 6px 11px 0 5px; border-bottom: 1px solid #383838; }
.grip-v { width: 3px; height: 20px; margin: 14px 20px 0 0; background: repeating-linear-gradient(#333 0 1px, transparent 1px 2px); }
.refpoint { margin: 12px 10px 0 0; }
.cgroup { display: grid; grid-auto-rows: 21px; row-gap: 5px; align-items: center; }
.xy { grid-template-columns: 14px 87px; }
.xy label { font-weight: 600; }
.len { margin-left: 12px; }
.chain { margin: 15px 10px 0; color: #c8c8c8; }
.csep { width: 1px; height: 47px; background: #484848; }
.scale { grid-template-columns: 19px 87px; margin: 0 6px 0 7px; }
.angle { grid-template-columns: 17px 87px; margin: 0 5px 0 10px; }
.tbtn { width: 22px; height: 22px; display: grid; place-items: center; border-radius: 3px; padding: 0; }
.tbtn.on { background: #2e2e2e; }
.control > .tbtn { margin-top: 12px; }
.rot { grid-template-columns: 18px 18px; column-gap: 9px; margin: 0 12px 0 8px; }
.pbox { position: relative; width: 26px; height: 26px; margin: 11px 6px 0 0; }
.pbox b { position: absolute; inset: 0; text-align: center; font: 20px/26px "Liberation Serif", serif; }
.nav { grid-template-columns: 14px 19px; column-gap: 11px; margin: 0 7px 0 9px; }
.fill { grid-template-columns: 20px 17px; column-gap: 4px; margin: 0 5px; }
.more { height: 20px; display: grid; place-items: center; border: 1px solid #6e6e6e; border-radius: 2px; }
.one { grid-template-columns: 87px; margin: 0 12px 0 4px; }
.fx { display: grid; grid-auto-rows: 21px; row-gap: 5px; width: 91px; margin-right: 4px; }
.fxrow { display: flex; align-items: center; gap: 7px; }
.fxrow:first-child { gap: 14px; padding-left: 3px; }
.fxb { font: 15px/18px "Liberation Serif", serif; color: #c8c8c8; }
.pct { width: 70px; }
.wrap { grid-template-columns: 22px 22px; column-gap: 5px; margin: 0 6px; }
.cornerg { grid-template-columns: 19px 87px; margin: 0 5px 0 7px; }
.objstyle { display: grid; grid-template-columns: 27px 182px; grid-auto-rows: 21px; row-gap: 5px; align-items: center; margin: 0 5px 0 12px; }
.objicons { grid-column: 2; display: flex; justify-content: flex-end; gap: 10px; padding-right: 3px; }
.bolt { margin: 16px 10px 0 0; }
.cfgcol { display: grid; grid-auto-rows: 21px; row-gap: 5px; padding-left: 8px; justify-items: center; }
.cfgcol button { display: grid; place-items: center; }

/* fields */
.field, .combo { display: flex; height: 21px; background: #454545; border: 1px solid #6e6e6e; border-radius: 2px; color: #f0f0f0; min-width: 0; }
.field > span { flex: none; width: 17px; display: grid; place-items: center; border-right: 1px solid #6e6e6e; }
.field input { flex: 1; min-width: 0; width: 0; padding: 0 3px; }
.field i, .combo i { flex: none; width: 18px; display: grid; place-items: center; border-left: 1px solid #6e6e6e; }
.field.off { background: #5d5d5d; border-color: #5d5d5d; color: #c0c0c0; }
.field.off > span { border-right-color: #535353; }
.field.off i { border-left: 0; }
.combo select { flex: 1; min-width: 0; background: #e3e3e3; color: #000; padding: 0 3px; }
.combo.line select { background: linear-gradient(#000, #000) center / calc(100% - 8px) 8px no-repeat #e3e3e3; }
.combo.shape select { background: linear-gradient(#666, #666) 2px 2px / 62px 2px no-repeat, linear-gradient(#000, #000) 62px 2px / 1px 15px no-repeat #e3e3e3; }
.combo.gap { position: relative; background: #5d5d5d; border-color: #5d5d5d; }
.combo.gap select { color: #777; padding-left: 18px; }
.combo.gap > svg { position: absolute; left: 4px; top: 3px; border: 1px solid #222; }
.combo.gap i { border: 0; color: #aaa; }

/* workspace */
.workspace { flex: 1; display: flex; min-height: 0; }
.document { flex: 1; min-width: 0; display: flex; flex-direction: column; border-right: 2px solid #383838; }
.doctabs { height: 28px; flex: none; background: #424242; display: flex; }
.doctab { width: 286px; padding: 0 15px 0 39px; display: flex; align-items: center; justify-content: space-between; background: #535353; border-right: 1px solid #383838; font: 600 11px/16px "Open Sans", sans-serif; white-space: nowrap; }
.docview { flex: 1; min-height: 0; display: grid; grid-template: 17px 1fr / 17px 1fr 15px; }
.hruler { grid-column: 1 / 3; background: #1e1e1e; overflow: hidden; }
.hruler svg { width: 100%; }
.vruler { background: #1e1e1e; overflow: hidden; min-height: 0; }
.vruler svg { height: 100%; }
.hruler text, .vruler text { font: 9px "Open Sans", sans-serif; fill: #fff; }
.pasteboard { background: #5d5d5d; overflow: hidden; padding: 24px 0 0 99px; min-width: 0; min-height: 0; }
.spread text { text-rendering: geometricPrecision; }
.t-title { font: 900 20px Inter, sans-serif; fill: #fff; }
.t-mark { font: 12px "Open Sans", sans-serif; fill: #4f96ff; }
.t-folio { font: 900 32px Inter, sans-serif; fill: #0b9e95; }
.t-hash { font: 24px "Liberation Sans", sans-serif; fill: #4f96ff; }
.vscroll, .scroll { display: flex; flex-direction: column; align-items: center; justify-content: space-between; background: #4a4a4a; color: #999; padding: 6px 0 5px; }
.vscroll { grid-column: 3; grid-row: 1 / 3; }
.vtrack { flex: 1; margin: 5px 0 14px; width: 13px; display: flex; flex-direction: column; justify-content: flex-end; }
.thumb { display: block; background: #696969; border-radius: 7px; }
.vtrack .thumb { height: 22%; }

/* status bar */
.status { height: 16px; flex: none; display: flex; align-items: center; padding-left: 13px; white-space: nowrap; color: #e0e0e0; }
.status > button { margin-right: 13px; }
.status > .s2 { margin: 0 13px 0 3px; }
.status .page { width: 90px; height: 16px; margin-right: 13px; }
.status > button:nth-of-type(2) { margin-right: 12px; }
.profile { display: flex; align-items: center; justify-content: space-between; width: 110px; }
.status .errors { display: flex; align-items: center; width: 88px; margin: 0 5px 0 14px; gap: 6px; }
.errors svg { margin-left: auto; }
.dot { width: 11px; height: 11px; border-radius: 50%; background: #45ab45; }
.hscroll { flex: 1; height: 16px; display: flex; align-items: center; background: #4a4a4a; padding: 0 4px; color: #999; }
.htrack { flex: 1; padding: 0 173px 0 192px; }
.htrack .thumb { height: 14px; }
.status > .split { margin: 0 3px 0 7px; }

/* docks */
.dock { flex: none; display: flex; flex-direction: column; min-height: 0; border-right: 2px solid #383838; }
.dockhead { height: 12px; flex: none; background: #424242; display: flex; justify-content: flex-end; align-items: center; padding-right: 6px; border-bottom: 1px solid #383838; color: #c8c8c8; }
.icons { width: 41px; }
.iconset { display: flex; flex-direction: column; align-items: center; border-bottom: 1px solid #383838; padding: 4px 0 1px; color: #c8c8c8; }
.grip { width: 20px; height: 4px; background: repeating-linear-gradient(90deg, #333 0 1px, transparent 1px 2px); }
.iconset button { height: 28px; display: flex; align-items: center; justify-content: center; gap: 2px; }
.iconset .grip + button { margin-top: 3px; }
.icons .iconset:nth-child(3) button { gap: 0; align-items: stretch; padding: 3px 0; }
.bar { width: 1px; height: 18px; background: #c8c8c8; }
.ga { font: bold 18px/20px "Open Sans", sans-serif; }
.gs { font: italic bold 20px/20px "Liberation Serif", serif; }
.gm { font: bold 16px/14px "Open Sans", sans-serif; }
.low { align-self: flex-end; }
.hi { align-self: flex-start; }
.cc { width: 39px; }
.edge { width: 3px; }

.panels { width: 357px; }
.panel { display: flex; flex-direction: column; flex: none; border-bottom: 2px solid #3a3a3a; }
.panel:last-child { border: 0; flex: 1; min-height: 0; }
.tabs { display: flex; height: 28px; flex: none; background: linear-gradient(#383838, #383838) bottom / 100% 1px no-repeat #424242; font: 600 11px/16px "Open Sans", sans-serif; }
.tab { padding: 0 10px; border-right: 1px solid #383838; color: #9a9a9a; font: inherit; display: flex; align-items: center; gap: 5px; }
.tab.sel { background: #535353; color: #f0f0f0; padding: 0 11px 0 7px; }
.tab.sel svg { color: #bbb; }
.pmenu { padding: 0 6px; color: #c8c8c8; }
.masters { height: 187px; padding: 0 21px 0 3px; }
.master { display: flex; justify-content: space-between; align-items: center; height: 29px; }
.pg2 { display: flex; }
.pg { width: 18px; height: 24px; background: #fff; border: 1px solid #888; }
.pg.m { border-top: 2px solid #7ab8b4; }
.spreads { display: flex; height: 166px; border-top: 2px solid #616161; border-bottom: 1px solid #484848; }
.thumbs { flex: 1; display: flex; flex-direction: column; align-items: center; padding: 2px 2px 0 0; overflow: hidden; }
.thumbs text { font-size: 10px; fill: #eee; text-anchor: middle; }
.thumbs .dk { fill: #111; }
.thumbs .hot { font-weight: bold; fill: #fff; }
.scroll { width: 13px; margin-right: 1px; padding: 4px 0; }
.scroll .vtrack { width: 11px; margin: 3px 0; }
.vtrack.low .thumb { height: 60%; }
.vtrack.high { justify-content: flex-start; }
.vtrack.high .thumb { height: 50%; }
.pfoot { height: 25px; display: flex; align-items: center; gap: 16px; padding: 0 25px 0 4px; }
.pfoot button { color: #c8c8c8; }
.pfoot button.dim { color: #8a8a8a; }
.form { display: grid; grid-template-columns: 69px 1fr; column-gap: 6px; grid-auto-rows: 22px; row-gap: 6px; padding-top: 4px; align-items: center; }
.form > :nth-child(odd) { text-align: right; white-space: nowrap; }
.form.two { row-gap: 5px; padding: 0 0 5px; }
.r { display: flex; align-items: center; gap: 2px; }
.r .mid { width: 34px; display: grid; place-items: center; color: #c8c8c8; }
.stroke hr { width: 230px; height: 1px; border: 0; background: #484848; margin: 6px 0 6px 5px; }
.w88 { width: 88px; } .w55 { width: 55px; } .w160 { width: 160px; } .w61 { width: 61px; } .w52 { width: 52px; } .w53 { width: 53px; }
.unit { padding-left: 4px; }
.swtop { display: flex; align-items: center; height: 39px; padding-left: 6px; flex: none; }
.swtop .tbtn { margin-left: 8px; width: 19px; height: 19px; }
.tt { font: bold 15px/18px "Liberation Serif", serif; color: #c8c8c8; }
.swtop .tt { margin: 0 42px 0 6px; }
.swtop .field { margin: 0 3px 0 6px; }
.swlist { display: flex; flex: none; border: 1px solid #616161; border-width: 1px 0; }
.swlist ul { flex: 1; }
.swlist li { height: 22px; display: flex; align-items: center; gap: 5px; padding: 0 15px 0 19px; border-bottom: 1px solid #616161; color: #f0f0f0; }
.swlist li > * { flex: none; }
.swlist li > .grow { flex: 1; padding-left: 2px; }
.swlist li > span:nth-child(4) { width: 11px; }
.swlist .sel { background: #4f6b86; font-weight: bold; }
.chip { width: 13px; height: 13px; border: 1px solid #2a2a2a; }

/* floating tool box */
.toolbox { position: absolute; left: 1px; top: 89px; width: 39px; height: 629px; background: #535353; border: 1px solid #383838; border-radius: 3px 3px 0 0; display: flex; flex-direction: column; align-items: center; color: #c8c8c8; }
.tbhead { align-self: stretch; height: 13px; display: flex; align-items: center; justify-content: space-between; padding: 0 5px 0 7px; background: #424242; border-bottom: 1px solid #383838; }
.toolbox > .grip { margin: 3px 0 7px; flex: none; }
.tools { display: flex; flex-direction: column; align-items: center; align-self: stretch; }
.tools button, .bigbtn { position: relative; width: 28px; height: 24px; display: grid; place-items: center; }
.tools hr { width: 37px; height: 1px; border: 0; margin: 1px 0; background: #484848; }
.tools .on { background: linear-gradient(#2e2e2e, #2e2e2e) center / 28px 22px no-repeat; }
.cor { position: absolute; right: 1px; bottom: 2px; }
.tools .tt { font-size: 21px; line-height: 24px; }
.grad { width: 16px; height: 14px; border: 1px solid #c8c8c8; background: linear-gradient(90deg, #c8c8c8, #444); }
.feather { background: repeating-conic-gradient(#666 0 25%, transparent 0 50%) top / 6px 6px repeat-x, linear-gradient(#555, #bbb); }
.mini { display: flex; gap: 8px; align-items: center; align-self: flex-start; height: 18px; padding-left: 3px; }
.big { align-self: flex-start; margin: 2px 0 7px 4px; }
.fmt { display: flex; gap: 5px; align-items: center; width: 28px; height: 14px; }
.fmt .on { width: 14px; height: 12px; display: grid; place-items: center; background: #2e2e2e; border-radius: 2px; }
.fmt .tt { font-size: 12px; line-height: 12px; }
.bigbtn { height: 22px; background: #2e2e2e; border-radius: 3px; margin-top: 6px; }
.bigbtn + .bigbtn { margin-top: 7px; }
```
FILE: app.js
```js
const NS = "http://www.w3.org/2000/svg";
const MM = 37.8 / 10;

function add(parent, name, attrs, text) {
  const el = document.createElementNS(NS, name);
  for (const key in attrs) el.setAttribute(key, attrs[key]);
  if (text !== undefined) el.textContent = text;
  parent.appendChild(el);
}

// Horizontal ruler: values fall from left to right, one tick for each millimetre.
const hr = document.getElementById("hruler");
let d = "";
for (let mm = 615; mm > 250; mm--) {
  const x = Math.round(59 + (610 - mm) * MM);
  const h = mm % 10 === 0 ? 16 : mm % 5 === 0 ? 5 : 3;
  d += `M${x}.5 16v-${h}`;
  if (mm % 10 === 0 && mm > 255) add(hr, "text", { x: x + 2, y: 10 }, mm);
}
add(hr, "path", { d: d + "M0 16.5h2000", stroke: "#999", "shape-rendering": "crispEdges" });

// Vertical ruler: the digits of each label are stacked. Labels start below the tool box.
const vr = document.getElementById("vruler");
d = "";
for (let mm = 0; mm < 235; mm++) {
  const y = Math.round(761 + (mm - 180) * MM);
  const w = mm % 10 === 0 ? 16 : mm % 5 === 0 ? 5 : 3;
  d += `M16 ${y}.5h-${w}`;
  if (mm % 10 !== 0 || mm < 130) continue;
  [...String(mm)].forEach((c, i) => {
    if ((mm === 130 && i === 0) || (mm === 220 && i === 2)) return;
    add(vr, "text", { x: 3, y: y + 10 + i * 9 }, c);
  });
}
add(vr, "path", { d: d + "M16.5 0v2000", stroke: "#999", "shape-rendering": "crispEdges" });

// Pixelated text block: one hex digit of grey for each 7px cell.
const rows = {
  301: "babeedeefbeefbc9eefeeeedfeefefeeeefefdb",
  308: "35897357d763d27574446774f2654d6635434b",
  315: "effeedeedefefeedeeeaaeeefdbaafeeeaefee",
  343: "deeeedeeeeeefeeeeeeddceedfdfedfeeeedeedeefeeeeedfeeddeeefeeedecdcd",
  350: "aaabbacbabcbeaabbbbcdbaaaabdbaeaabbcbaaaaaddbacdb9becbabcaeabcba9b",
  357: "fdffffffdfffffffffffffffffefffffdeffffffffffeffffeffeffffffdefffff",
  364: "ccdcbeabababfbbbbbcbf8befcbbbe9bbaccbcccebcabccbecbbbfabeaaebbbccb",
  371: "ddeecddcddecdddccdddedecedecdcdeccccdbeedddcdeeedccdddedcdecccdccc",
  378: "eedfeedeeeefeedeeefdddeedeefdedceeedeedddeeefdeefeedeefedeeedeeeee",
  385: "babcdaaabdafaaaabef9fbbabababfaabaababaaabaaaacdb9cfaa9abfabacdcaa",
  392: "fffefffffffffffffeffffdeeffffffffffdfffffffffddfffffffffefffffffff",
  399: "bbcbbcbbcb9bbabbbbbcbbabbbcbabbbc",
  406: "ddeedddedddeeddddeedeedddddddeede"
};
const g = document.getElementById("mosaic");
const cell = (x, y, w, h, fill) => add(g, "rect", { x, y, width: w, height: h, fill });
cell(168, 294, 476, 154, "#fff");
cell(168, 274, 7, 27, "#d8ffff");
cell(637, 274, 7, 27, "#d8ffff");
cell(175, 294, 462, 7, "#e5f0ff");
cell(168, 301, 7, 147, "#d5d1fb");
cell(637, 301, 7, 147, "#e5f0ff");
for (const y in rows) {
  [...rows[y]].forEach((c, i) => cell(175 + i * 7, +y, 7, 7, "#" + c + c + c));
  cell(168, +y, 7, 7, "#c3bde9");
}
[343, 350, 364, 371, 385].forEach(y => cell(637, y, 7, 7, "#b6c2d6"));
cell(441, 301, 7, 7, "#aeb4c4");
cell(441, 308, 7, 7, "#8fa3c8");
cell(448, 308, 7, 7, "#e5f0ff");
cell(406, 399, 7, 7, "#cfe0ff");
cell(406, 406, 7, 7, "#eef3ff");
```
